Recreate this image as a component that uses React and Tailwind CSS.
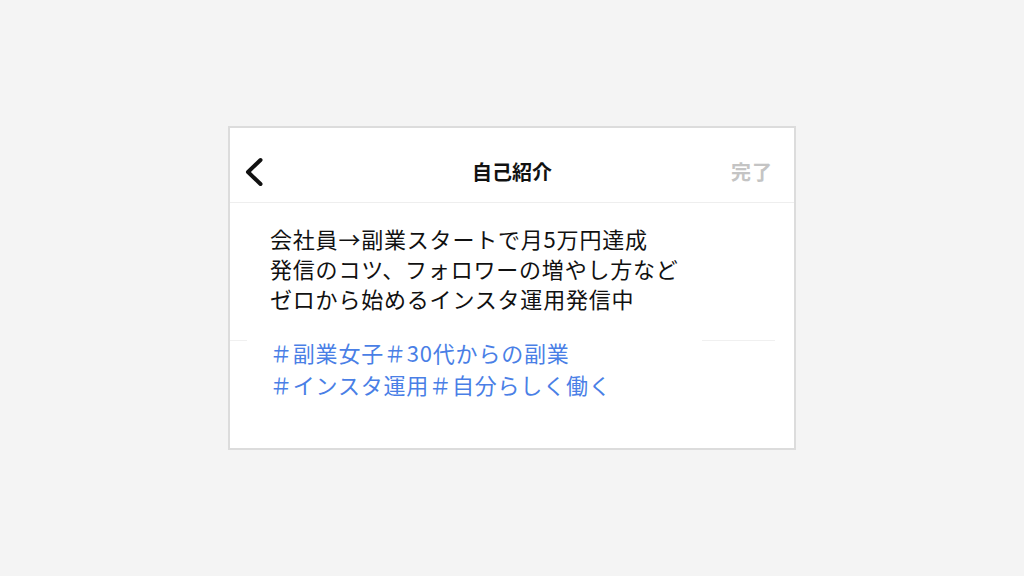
export default function App() {
  return (
    <div
      className="w-[1024px] h-[576px] bg-[#f4f4f4] flex items-center justify-center"
      style={{ fontFamily: '"Noto Sans CJK JP", "Noto Sans", sans-serif' }}
    >
      <div className="w-[568px] h-[324px] bg-white border-2 border-[#dcdcdc] flex flex-col">
        {/* Header */}
        <div className="pt-[30px] pb-[16px] border-b border-[#eeeeee]">
          <div className="h-[28px] flex items-center justify-between pl-[14px] pr-[21px] relative">
            <svg width="20" height="30" viewBox="0 0 20 30" fill="none">
              <path
                d="M16.5 3 L4 15 L16.5 27"
                stroke="#111111"
                strokeWidth="4"
                strokeLinecap="round"
                strokeLinejoin="round"
              />
            </svg>
            <div className="absolute inset-0 flex items-center justify-center text-[20px] font-bold text-[#111111]">
              自己紹介
            </div>
            <div className="text-[20px] font-bold tracking-[1px] text-[#c4c4c4]">完了</div>
          </div>
        </div>

        {/* Body */}
        <div className="pt-[20px] pl-[40px] text-[22px] leading-[30px] tracking-[0.8px] font-normal text-[#111111]">
          <p>会社員→副業スタートで月5万円達成</p>
          <p>発信のコツ、フォロワーの増やし方など</p>
          <p>ゼロから始めるインスタ運用発信中</p>
        </div>

        <div className="mt-[27px] flex">
          <div className="w-[17px] h-px bg-[#f0f0f0]" />
          <div className="flex-1" />
          <div className="w-[73px] h-px bg-[#f0f0f0]" />
          <div className="w-[19px]" />
        </div>

        <div className="-mt-[5px] pl-[40px] text-[22px] leading-[32px] tracking-[0.8px] font-normal text-[#4a7fe6]">
          <p>＃副業女子＃30代からの副業</p>
          <p>＃インスタ運用＃自分らしく働く</p>
        </div>
      </div>
    </div>
  );
}
